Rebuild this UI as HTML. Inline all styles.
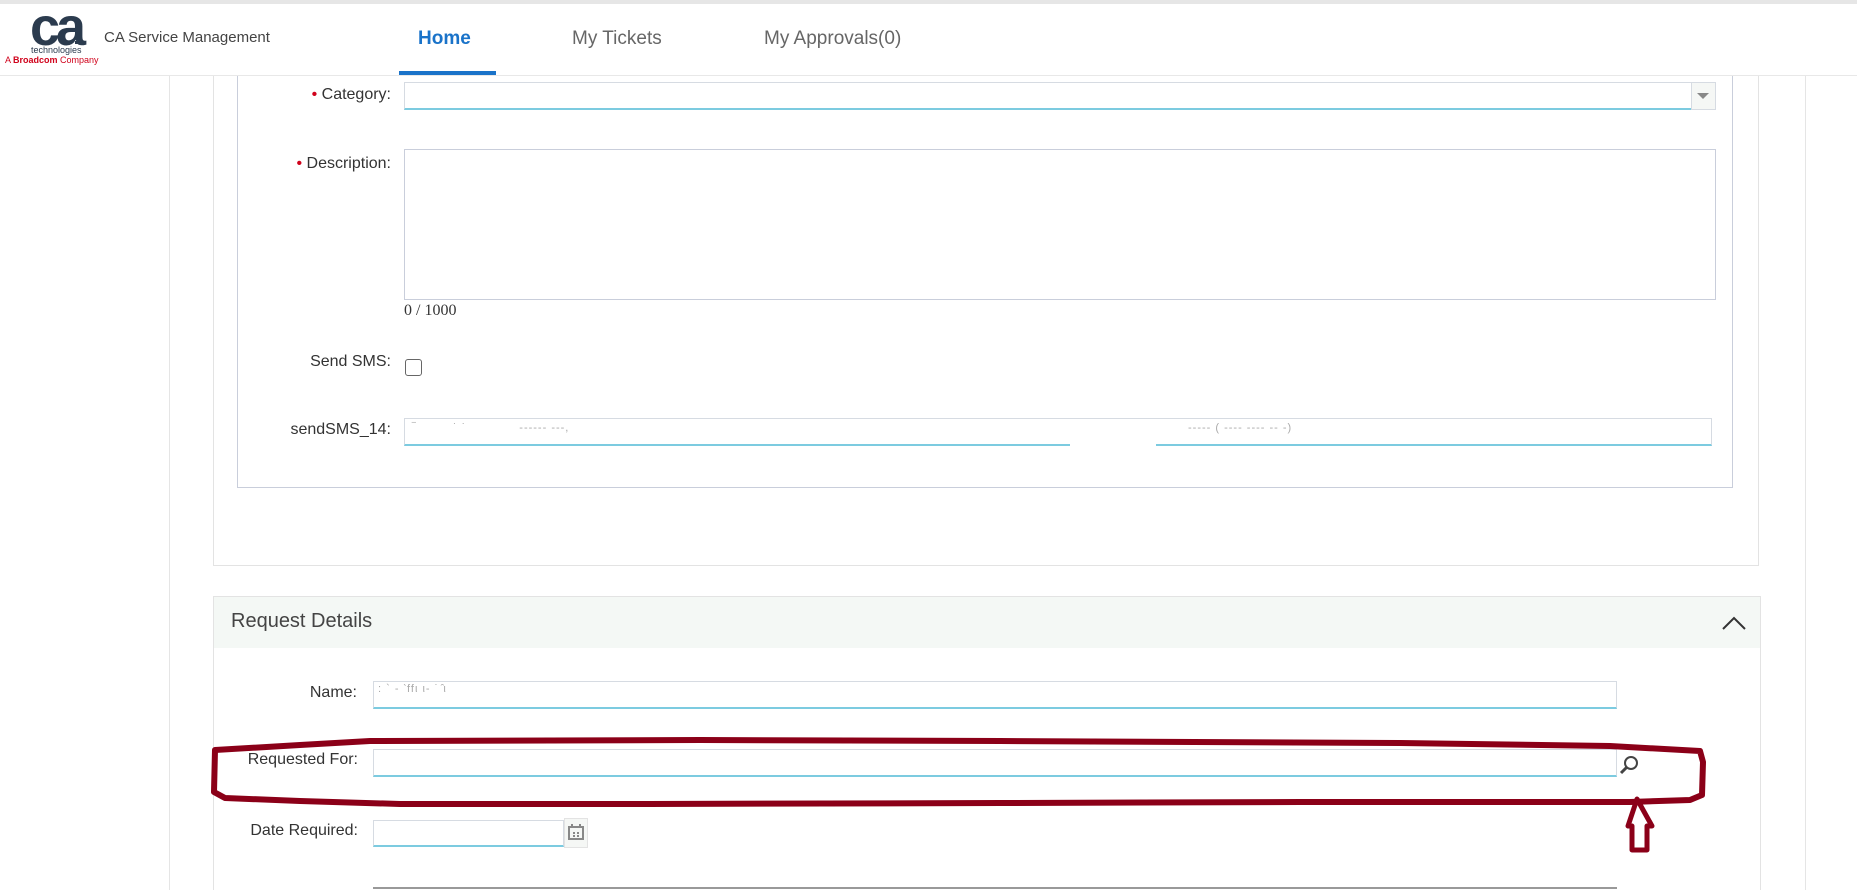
<!DOCTYPE html>
<html><head><meta charset="utf-8"><style>
*{box-sizing:border-box;margin:0;padding:0}
body{width:1857px;height:890px;overflow:hidden;background:#fff;font-family:"Liberation Sans",Arial,sans-serif;position:relative;color:#333}
.a{position:absolute}
.lbl{position:absolute;font-size:16px;color:#333;text-align:right}
.inp{position:absolute;background:#fff;border:1px solid #d6dbe2;border-bottom:2px solid #7ccbe0}
.red{color:#d0021b}
.blur{position:absolute;font-size:11px;color:#aaa;letter-spacing:1px}
</style></head><body>
<div class="a" style="left:0;top:0;width:1857px;height:4px;background:#e6e6e6"></div>
<div class="a" style="left:0;top:75px;width:1857px;height:1px;background:#e8e8e8"></div>
<!-- logo -->
<div class="a" style="left:30px;top:0px;font:bold 54px 'Liberation Sans',sans-serif;color:#2b3b4e;letter-spacing:-4px;line-height:54px">ca</div>
<div class="a" style="left:75px;top:41px;width:3px;height:3px;background:#2b3b4e"></div>
<div class="a" style="left:31px;top:45px;font-size:9px;color:#2b3b4e">technologies</div>
<div class="a" style="left:5px;top:55px;font-size:9px;color:#d0021b">A <b>Broadcom</b> Company</div>
<div class="a" style="left:104px;top:29px;font-size:15px;color:#444">CA Service Management</div>
<div class="a" style="left:418px;top:28px;font-size:19px;font-weight:bold;color:#1a73c9">Home</div>
<div class="a" style="left:399px;top:71px;width:97px;height:4px;background:#1a73c9"></div>
<div class="a" style="left:572px;top:28px;font-size:19px;color:#666">My Tickets</div>
<div class="a" style="left:764px;top:28px;font-size:19px;color:#666">My Approvals(0)</div>
<!-- frame lines -->
<div class="a" style="left:169px;top:76px;width:1px;height:814px;background:#e5e5e5"></div>
<div class="a" style="left:1805px;top:76px;width:1px;height:814px;background:#e5e5e5"></div>
<div class="a" style="left:213px;top:76px;width:1546px;height:490px;border:1px solid #e3e3e3;border-top:none"></div>
<div class="a" style="left:237px;top:76px;width:1496px;height:412px;border:1px solid #c9cedb;border-top:none"></div>
<!-- form -->
<div class="lbl" style="right:1466px;top:86px"><span class="red">•</span> Category:</div>
<div class="inp" style="left:404px;top:82px;width:1288px;height:28px"></div>
<div class="a" style="left:1691px;top:82px;width:25px;height:28px;background:#f5f7f5;border:1px solid #d6dbe2"></div>
<div class="a" style="left:1697px;top:93px;border-left:6px solid transparent;border-right:6px solid transparent;border-top:6px solid #888"></div>
<div class="lbl" style="right:1466px;top:155px"><span class="red">•</span> Description:</div>
<div class="a" style="left:404px;top:149px;width:1312px;height:151px;border:1px solid #c9cedb"></div>
<div class="a" style="left:404px;top:302px;font:16px 'Liberation Serif',serif;color:#333">0 / 1000</div>
<div class="lbl" style="right:1466px;top:353px">Send SMS:</div>
<div class="a" style="left:405px;top:359px;width:17px;height:17px;border:1px solid #666;border-radius:3px"></div>
<div class="lbl" style="right:1466px;top:421px">sendSMS_14:</div>
<div class="inp" style="left:404px;top:418px;width:1308px;height:28px"></div>
<div class="blur" style="left:412px;top:422px">‾ &nbsp; &nbsp; &nbsp; &nbsp; ˙ ˙ &nbsp; &nbsp; &nbsp; &nbsp; &nbsp; &nbsp; ------ ---,</div>
<div class="blur" style="left:1188px;top:422px">----- ( ---- ---- -- -)</div>
<div class="a" style="left:1070px;top:440px;width:86px;height:8px;background:#fff"></div>
<!-- request details -->
<div class="a" style="left:213px;top:596px;width:1548px;height:294px;border:1px solid #e3e3e3;border-bottom:none"></div>
<div class="a" style="left:214px;top:597px;width:1546px;height:51px;background:#f4f8f5"></div>
<div class="a" style="left:231px;top:610px;font-size:20px;color:#444">Request Details</div>
<svg class="a" style="left:1720px;top:614px" width="28" height="18"><path d="M3 15 L14 4 L25 15" fill="none" stroke="#333" stroke-width="2"/></svg>
<div class="lbl" style="right:1500px;top:684px">Name:</div>
<div class="inp" style="left:373px;top:681px;width:1244px;height:28px"></div>
<div class="blur" style="left:378px;top:682px">: ` - ‵ffι ι- ˙ ̂ι</div>
<div class="lbl" style="right:1499px;top:751px">Requested For:</div>
<div class="inp" style="left:373px;top:749px;width:1244px;height:28px"></div>
<svg class="a" style="left:1618px;top:754px" width="22" height="22"><circle cx="13" cy="9" r="6" fill="none" stroke="#444" stroke-width="2"/><path d="M9 13 L3 19" stroke="#444" stroke-width="3"/></svg>
<div class="lbl" style="right:1499px;top:822px">Date Required:</div>
<div class="inp" style="left:373px;top:820px;width:191px;height:27px"></div>
<div class="a" style="left:564px;top:818px;width:24px;height:30px;background:#f5f7f5;border:1px solid #e3e3e3"></div>
<svg class="a" style="left:567px;top:823px" width="18" height="18"><rect x="2" y="4" width="14" height="12" fill="none" stroke="#888" stroke-width="2"/><rect x="4" y="1" width="2" height="4" fill="#888"/><rect x="12" y="1" width="2" height="4" fill="#888"/><rect x="6" y="9" width="2" height="2" fill="#888"/><rect x="10" y="9" width="2" height="2" fill="#888"/><rect x="6" y="12" width="2" height="2" fill="#888"/><rect x="10" y="12" width="2" height="2" fill="#888"/></svg>
<div class="a" style="left:373px;top:887px;width:1244px;height:3px;border-top:2px solid #999"></div>
<!-- annotation -->
<svg class="a" style="left:0;top:0" width="1857" height="890"><path d="M215 750 L300 745 L370 741 L700 740 L1000 741 L1400 743 L1610 746 L1700 751 L1703 762 L1702 795 L1690 800 L1630 802 L1580 802 L1300 802 L1000 803 L650 804 L400 804 L300 801 L225 798 L214 792 Z" fill="none" stroke="#8b0018" stroke-width="6" stroke-linejoin="round"/>
<path d="M1637 799 L1628 826 L1632 826 L1632 850 L1647 850 L1647 826 L1652 826 Z" fill="#fff" stroke="#8b0018" stroke-width="5" stroke-linejoin="round"/></svg>
</body></html>
